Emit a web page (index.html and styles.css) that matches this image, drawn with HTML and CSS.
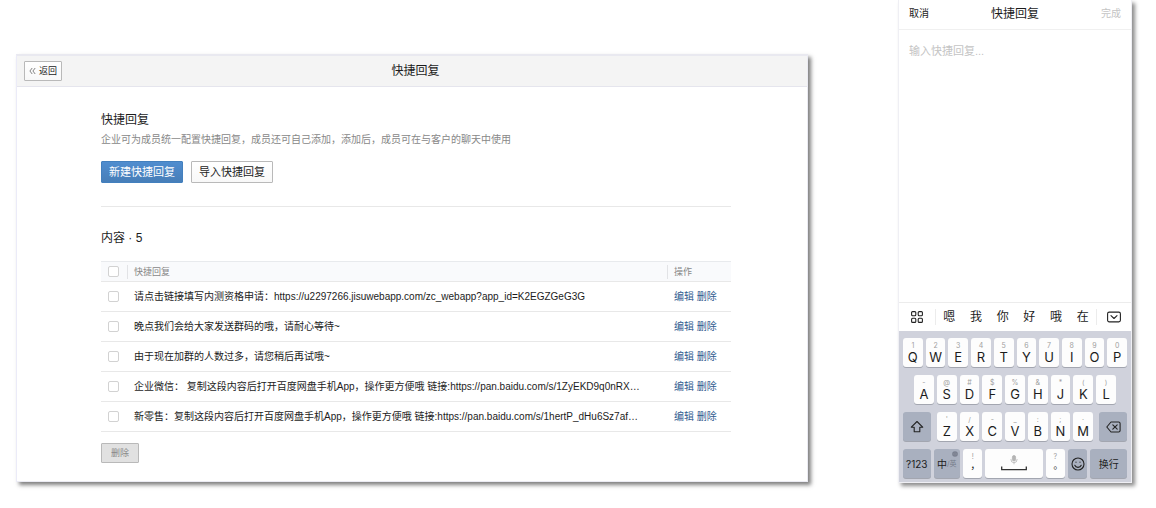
FILE: index.html
```html
<!DOCTYPE html>
<html lang="zh-CN">
<head>
<meta charset="utf-8">
<meta name="viewport" content="width=device-width, initial-scale=1">
<title>快捷回复</title>
<link rel="stylesheet" href="styles.css">
</head>
<body>
<main class="stage">
  <section class="panel">
    <header class="panel-header">
      <button class="btn btn-back" type="button"><svg class="back-icon" viewBox="0 0 7 8" aria-hidden="true"><path d="M3.2 1 .9 4l2.3 3M6.2 1 3.9 4l2.3 3"/></svg>返回</button>
      <h1 class="panel-title">快捷回复</h1>
    </header>
    <div class="panel-body">
      <div class="intro">
        <h2 class="heading">快捷回复</h2>
        <p class="desc">企业可为成员统一配置快捷回复，成员还可自己添加，添加后，成员可在与客户的聊天中使用</p>
        <div class="actions">
          <button class="btn btn-primary" type="button">新建快捷回复</button>
          <button class="btn" type="button">导入快捷回复</button>
        </div>
      </div>
      <h2 class="heading">内容 · 5</h2>
      <table class="replies">
        <thead>
          <tr><th class="col-check"><input class="check" type="checkbox" aria-label="全选"></th><th class="col-text"><span class="th-label">快捷回复</span></th><th class="col-ops"><span class="th-label">操作</span></th></tr>
        </thead>
        <tbody>
          <tr><td class="col-check"><input class="check" type="checkbox" aria-labelledby="r1"></td><td class="col-text" id="r1">请点击链接填写内测资格申请：https://u2297266.jisuwebapp.com/zc_webapp?app_id=K2EGZGeG3G</td><td class="col-ops"><a href="#">编辑</a> <a href="#">删除</a></td></tr>
          <tr><td class="col-check"><input class="check" type="checkbox" aria-labelledby="r2"></td><td class="col-text" id="r2">晚点我们会给大家发送群码的哦，请耐心等待~</td><td class="col-ops"><a href="#">编辑</a> <a href="#">删除</a></td></tr>
          <tr><td class="col-check"><input class="check" type="checkbox" aria-labelledby="r3"></td><td class="col-text" id="r3">由于现在加群的人数过多，请您稍后再试哦~</td><td class="col-ops"><a href="#">编辑</a> <a href="#">删除</a></td></tr>
          <tr><td class="col-check"><input class="check" type="checkbox" aria-labelledby="r4"></td><td class="col-text" id="r4">企业微信： 复制这段内容后打开百度网盘手机App，操作更方便哦 链接:https://pan.baidu.com/s/1ZyEKD9q0nRX…</td><td class="col-ops"><a href="#">编辑</a> <a href="#">删除</a></td></tr>
          <tr><td class="col-check"><input class="check" type="checkbox" aria-labelledby="r5"></td><td class="col-text" id="r5">新零售：复制这段内容后打开百度网盘手机App，操作更方便哦 链接:https://pan.baidu.com/s/1hertP_dHu6Sz7af…</td><td class="col-ops"><a href="#">编辑</a> <a href="#">删除</a></td></tr>
        </tbody>
      </table>
      <button class="btn btn-delete" type="button" disabled>删除</button>
    </div>
  </section>

  <section class="phone">
    <header class="phone-header">
      <button class="nav-btn" type="button">取消</button>
      <h2 class="phone-title">快捷回复</h2>
      <button class="nav-btn nav-done" type="button" disabled>完成</button>
    </header>
    <textarea class="editor" aria-label="快捷回复" placeholder="输入快捷回复..."></textarea>
    <div class="candidates">
      <button class="cand-icon" type="button" aria-label="菜单"><svg class="icon-grid" viewBox="0 0 12 12" aria-hidden="true"><rect x=".6" y=".6" width="4.2" height="4.2" rx="1"/><rect x="7.2" y=".6" width="4.2" height="4.2" rx="1"/><rect x=".6" y="7.2" width="4.2" height="4.2" rx="1"/><rect x="7.2" y="7.2" width="4.2" height="4.2" rx="1"/></svg></button>
      <div class="cand-list">
        <button class="cand" type="button">嗯</button><button class="cand" type="button">我</button><button class="cand" type="button">你</button><button class="cand" type="button">好</button><button class="cand" type="button">哦</button><button class="cand" type="button">在</button>
      </div>
      <button class="cand-icon" type="button" aria-label="收起"><svg class="icon-hide" viewBox="0 0 14 12" aria-hidden="true"><rect x=".6" y="1.1" width="12.8" height="9.8" rx="1.6"/><path d="m4 4.6 3 2.9 3-2.9"/></svg></button>
    </div>
    <div class="keyboard">
      <div class="keys">
        <button class="key" type="button"><small class="hint">1</small>Q</button><button class="key" type="button"><small class="hint">2</small>W</button><button class="key" type="button"><small class="hint">3</small>E</button><button class="key" type="button"><small class="hint">4</small>R</button><button class="key" type="button"><small class="hint">5</small>T</button><button class="key" type="button"><small class="hint">6</small>Y</button><button class="key" type="button"><small class="hint">7</small>U</button><button class="key" type="button"><small class="hint">8</small>I</button><button class="key" type="button"><small class="hint">9</small>O</button><button class="key" type="button"><small class="hint">0</small>P</button>
      </div>
      <div class="keys keys-inset">
        <button class="key" type="button"><small class="hint">-</small>A</button><button class="key" type="button"><small class="hint">@</small>S</button><button class="key" type="button"><small class="hint">#</small>D</button><button class="key" type="button"><small class="hint">$</small>F</button><button class="key" type="button"><small class="hint">%</small>G</button><button class="key" type="button"><small class="hint">&amp;</small>H</button><button class="key" type="button"><small class="hint">*</small>J</button><button class="key" type="button"><small class="hint">(</small>K</button><button class="key" type="button"><small class="hint">)</small>L</button>
      </div>
      <div class="keys keys-shift">
        <button class="key key-dark" type="button" aria-label="大写"><svg class="icon-shift" viewBox="0 0 14 14" aria-hidden="true"><path d="M7 1.5 1.3 7.2h2.9v4.6h5.6V7.2h2.9z"/></svg></button>
        <div class="keys keys-mid"><button class="key" type="button"><small class="hint">'</small>Z</button><button class="key" type="button"><small class="hint">/</small>X</button><button class="key" type="button"><small class="hint">-</small>C</button><button class="key" type="button"><small class="hint">_</small>V</button><button class="key" type="button"><small class="hint">:</small>B</button><button class="key" type="button"><small class="hint">;</small>N</button><button class="key" type="button"><small class="hint">·</small>M</button></div>
        <button class="key key-dark" type="button" aria-label="退格"><svg class="icon-erase" viewBox="0 0 15 12" aria-hidden="true"><path d="M5 1h7.6c.9 0 1.5.6 1.5 1.5v7c0 .9-.6 1.5-1.5 1.5H5L.8 6zM6.8 3.8l4.4 4.4m0-4.4L6.8 8.2"/></svg></button>
      </div>
      <div class="keys keys-bottom">
        <button class="key key-dark key-label" type="button">?123</button>
        <button class="key key-dark key-lang" type="button"><span class="lang-main">中</span><span class="lang-sub">/英</span><svg class="icon-globe" viewBox="0 0 6 6" aria-hidden="true"><circle cx="3" cy="3" r="2.8" fill="#777d8c"/><path d="M.3 3h5.4M3 .3c-1.6 1.7-1.6 3.7 0 5.4M3 .3c1.6 1.7 1.6 3.7 0 5.4" fill="none" stroke="#959baa" stroke-width=".4"/></svg></button>
        <button class="key" type="button"><small class="hint">!</small><span class="mark" lang="zh-TW">，</span></button>
        <button class="key key-space" type="button" aria-label="空格"><svg class="icon-space" viewBox="0 0 26 17" aria-hidden="true"><g fill="none" stroke="#b5b5b5" stroke-width=".8"><rect x="11.4" y=".5" width="3.2" height="5.6" rx="1.6" fill="#b5b5b5"/><path d="M10 4v.7a3 3 0 0 0 6 0V4M13 7.7v1.6"/></g><path d="M.7 11.5v3.2h24.6v-3.2" fill="none" stroke="#333" stroke-width="1.3"/></svg></button>
        <button class="key" type="button"><small class="hint">?</small><span class="mark" lang="zh-TW">。</span></button>
        <button class="key key-dark" type="button" aria-label="表情"><svg class="icon-smile" viewBox="0 0 14 14" aria-hidden="true"><circle cx="7" cy="7" r="6"/><path d="M3.8 8.3c1 2.7 5.4 2.7 6.4 0"/><path d="M5 5v.3M9 5v.3"/></svg></button>
        <button class="key key-dark key-label" type="button">换行</button>
      </div>
    </div>
  </section>
</main>
</body>
</html>
```
FILE: styles.css
```css
* { box-sizing: border-box; }

body {
  margin: 0;
  background: #fff;
  color: #1c1c1c;
  font-family: "Liberation Sans", "Noto Sans CJK SC", sans-serif;
  font-size: 10px;
  line-height: 16px;
}

h1, h2, p { margin: 0; font-weight: 400; }
button, textarea { font: inherit; color: inherit; }
button { padding: 0; border: 0; background: none; }
a { color: #2f5b8f; text-decoration: none; }
svg { display: block; flex: none; }

.stage {
  display: grid;
  grid-template-columns: minmax(0, 1fr) 234px;
  column-gap: 90px;
  align-items: start;
  padding: 0 24px 24px 16px;
}

/* Desktop panel */
.panel {
  margin-top: 54px;
  border: 1px solid #ebebf3;
  border-top: 2px solid #e9e9f0;
  border-left-color: #ebebf8;
  background: #fff;
  box-shadow: 3px 3px 4px rgba(0, 0, 0, .5);
}

.panel-header {
  display: grid;
  grid-template-columns: 1fr auto 1fr;
  align-items: center;
  height: 31px;
  padding-left: 7px;
  border-bottom: 1px solid #e5e5ed;
  background: #f4f4f4;
}

.panel-title { font-size: 12px; }

.panel-body { padding: 25px 76px 18px 84px; }

.intro {
  margin-bottom: 23px;
  padding-bottom: 23px;
  border-bottom: 1px solid #e8e8e8;
}

.heading { font-size: 12px; }
.desc { margin-top: 4px; color: #888; }
.actions { display: flex; gap: 8px; margin-top: 13px; }

.btn {
  height: 22px;
  padding: 0 7px;
  border: 1px solid #b9b9b9;
  border-radius: 1px;
  background: linear-gradient(#fff, #f8f8f8);
  font-size: 11px;
  line-height: 20px;
}

.btn-primary {
  border-color: #4380be;
  background: linear-gradient(#508dcf, #477eb8);
  color: #fff;
}

.btn-back, .btn-delete {
  width: 38px;
  height: 20px;
  padding: 0;
  font-size: 9px;
  line-height: 18px;
}

.btn-back {
  display: flex;
  align-items: center;
  justify-content: center;
  gap: 3px;
}

.back-icon { width: 7px; height: 8px; fill: none; stroke: #666; stroke-width: .8; }

.btn-delete { margin-top: 11px; background: #e1e1e1; color: #888; }

.replies {
  width: 100%;
  margin-top: 15px;
  border-collapse: collapse;
  border-top: 1px solid #e8eaed;
  table-layout: fixed;
}

.replies tr { border-bottom: 1px solid #e8e8e8; }
.replies thead tr { background: #f9fafc; }
.replies th { height: 20px; padding: 0; color: #888; font-size: 9px; font-weight: 400; text-align: left; }
.replies td { height: 30px; padding: 0; }
.replies .col-check { width: 26px; padding-left: 7px; }
.replies .col-text { overflow: hidden; text-overflow: ellipsis; white-space: nowrap; }
.replies td.col-text { padding-left: 7px; }
.replies .col-ops { width: 64px; white-space: nowrap; }
.replies td.col-ops { padding-left: 7px; }
.th-label { display: block; padding-left: 6px; border-left: 1px solid #e2e3e6; line-height: 14px; }

.check {
  appearance: none;
  display: block;
  width: 11px;
  height: 11px;
  margin: 0;
  border: 1px solid #d2d2d2;
  border-radius: 2px;
  background: #fff;
}

/* Phone */
.phone {
  border: 1px solid #efeff4;
  border-top: 0;
  background: #fff;
  box-shadow: 3px 3px 4px rgba(0, 0, 0, .45);
}

.phone-header {
  display: grid;
  grid-template-columns: 1fr auto 1fr;
  align-items: center;
  height: 30px;
  padding: 0 10px 2px;
  border-bottom: 1px solid #f0f0f0;
}

.nav-btn { justify-self: start; }
.nav-done { justify-self: end; color: #c4c4c4; }
.phone-title { font-size: 12px; }

.editor {
  display: block;
  width: 100%;
  height: 272px;
  padding: 13px 10px;
  border: 0;
  outline: 0;
  resize: none;
  font-size: 11px;
}

.editor::placeholder { color: #c4c4c4; }

.candidates {
  display: grid;
  grid-template-columns: 36px 1fr 34px;
  align-items: center;
  height: 29px;
  border-top: 1px solid #ececec;
}

.cand-icon { display: grid; place-items: center; }
.cand-list { display: flex; border: solid #ececec; border-width: 0 1px; }
.cand { flex: 1; font-size: 12px; }

.icon-grid { width: 12px; height: 12px; }
.icon-hide { width: 14px; height: 12px; }
.icon-shift, .icon-smile { width: 14px; height: 14px; }
.icon-erase { width: 15px; height: 12px; }
.icon-grid, .icon-hide, .icon-shift, .icon-erase, .icon-smile {
  fill: none;
  stroke: #222;
  stroke-width: 1.1;
  stroke-linejoin: round;
  stroke-linecap: round;
}
.icon-space { width: 26px; height: 17px; }

.keyboard {
  display: grid;
  gap: 8px;
  padding: 7px 4px 4px;
  background: #d0d2dc;
}

.keys { display: grid; grid-auto-columns: minmax(0, 1fr); grid-auto-flow: column; gap: 3px; }
.keys-inset { padding: 0 11px; }
.keys-shift { grid-template-columns: 28px minmax(0, 1fr) 28px; gap: 6px; }
.keys-bottom { grid-template-columns: 27fr 26fr 19fr 56fr 19fr 19fr 36fr; }

.key {
  display: flex;
  flex-direction: column;
  align-items: center;
  justify-content: center;
  height: 29px;
  border-radius: 3px;
  background: #fdfdfd;
  box-shadow: 0 1px 0 #a3a6b0;
  font-family: Inter, "Noto Sans CJK SC", sans-serif;
  font-size: 13px;
  line-height: 14px;
}

.hint { color: #a0a0a0; font-size: 7px; line-height: 9px; }
.key-dark { background: #a9b0bf; }
.key-label { font-size: 10px; }
.key-lang { position: relative; flex-direction: row; }
.lang-main { font-size: 10px; }
.lang-sub { color: #777d8c; font-size: 7px; }
.icon-globe { position: absolute; top: 2px; right: 2px; width: 6px; height: 6px; }
.mark { font-family: "Noto Sans CJK TC", sans-serif; font-size: 10px; }
```
